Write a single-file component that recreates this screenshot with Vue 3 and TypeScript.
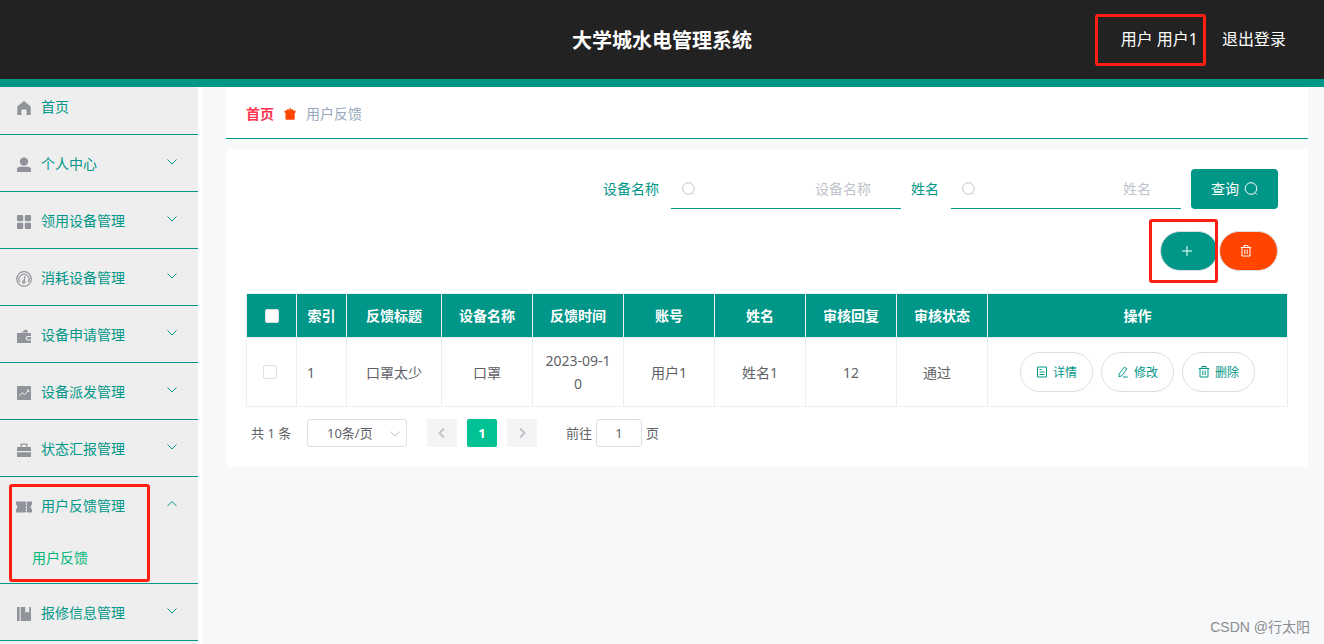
<script setup lang="ts">
import { ref } from 'vue'

interface MenuItem {
  name: string
  icon: string
  children?: string[]
}

interface Row {
  title: string
  device: string
  date: string
  account: string
  person: string
  reply: string
  status: string
}

const menu: MenuItem[] = [
  { name: '个人中心', icon: 'user' },
  { name: '领用设备管理', icon: 'grid' },
  { name: '消耗设备管理', icon: 'gauge' },
  { name: '设备申请管理', icon: 'wallet' },
  { name: '设备派发管理', icon: 'chart' },
  { name: '状态汇报管理', icon: 'case' },
  { name: '用户反馈管理', icon: 'ticket', children: ['用户反馈'] },
  { name: '报修信息管理', icon: 'book' },
]

const columns = ['反馈标题', '设备名称', '反馈时间', '账号', '姓名', '审核回复', '审核状态']

const rows: Row[] = [
  {
    title: '口罩太少',
    device: '口罩',
    date: '2023-09-10',
    account: '用户1',
    person: '姓名1',
    reply: '12',
    status: '通过',
  },
]

const deviceName = ref('')
const personName = ref('')
const pageSize = ref('10')
const jumpPage = ref('1')
</script>

<template>
  <div class="page">
    <header class="header">
      <span></span>
      <h1>大学城水电管理系统</h1>
      <div class="account">
        <span class="user">用户 用户1<i class="mark mark-user"></i></span>
        <a href="#" class="logout">退出登录</a>
      </div>
    </header>

    <div class="body">
      <nav class="sidebar">
        <ul>
          <li class="home">
            <a href="#" class="entry">
              <svg class="icon" viewBox="0 0 16 16">
                <path d="M8 1 1.3 6.4V14.6q0 .4.4.4H5.4V10q0-.5.5-.5h4.2q.5 0 .5.5v5h3.7q.4 0 .4-.4V6.4z" />
              </svg>
              <span>首页</span>
            </a>
          </li>
          <li v-for="item in menu" :key="item.name">
            <button type="button" class="entry" :aria-expanded="!!item.children">
              <svg class="icon" viewBox="0 0 16 16">
                <template v-if="item.icon === 'user'">
                  <circle cx="8" cy="4.6" r="4.2" />
                  <path d="M1 15v-2.4Q1 9.8 3.8 9.8h8.4Q15 9.8 15 12.6V15z" />
                </template>
                <template v-else-if="item.icon === 'grid'">
                  <rect x="1" y="1" width="6.2" height="6.2" rx="1" />
                  <rect x="8.8" y="1" width="6.2" height="6.2" rx="1" />
                  <rect x="1" y="8.8" width="6.2" height="6.2" rx="1" />
                  <rect x="8.8" y="8.8" width="6.2" height="6.2" rx="1" />
                </template>
                <template v-else-if="item.icon === 'gauge'">
                  <g fill="none" stroke="#909399" stroke-width="1.2">
                    <circle cx="8" cy="8" r="7.3" />
                    <path d="M3.9 11.2A5 5 0 1 1 12.1 11.2M9 5 8 10" />
                    <circle cx="7.8" cy="11" r="1.2" />
                  </g>
                </template>
                <template v-else-if="item.icon === 'wallet'">
                  <path d="M5 4.4 9.8 1.5q.5-.2.8.2l1.7 2.7z" />
                  <path fill-rule="evenodd" d="M1 5h13.4q.6 0 .6.6V8h-3.1a2.3 2.3 0 0 0 0 4.6H15v1.8q0 .6-.6.6H1.6q-.6 0-.6-.6z" />
                  <path d="M12.1 9.1H15v2.4h-2.9a1.2 1.2 0 0 1 0-2.4z" />
                </template>
                <template v-else-if="item.icon === 'chart'">
                  <rect x="1" y="1" width="14" height="14" rx="0.6" />
                  <path d="M3.5 10.8 6.2 7.6l2.5 2 3.9-4.3M10.8 5.1h2v2" fill="none" stroke="#eee" />
                </template>
                <template v-else-if="item.icon === 'case'">
                  <path fill-rule="evenodd" d="M4.6 5V2q0-.6.6-.6h5.6q.6 0 .6.6v3H14.4q.6 0 .6.6V9H1V5.6Q1 5 1.6 5zM5.9 5h4.2V2.7H5.9z" />
                  <path d="M1 10.2h14v4.2q0 .6-.6.6H1.6q-.6 0-.6-.6z" />
                </template>
                <template v-else-if="item.icon === 'ticket'">
                  <path d="M0 2.4h9.4l1 1.2 1-1.2H16v3.2q-2.8 2.4 0 4.8v3.2h-4.6l-1-1.2-1 1.2H0v-3.2q2.8-2.4 0-4.8z" />
                  <path d="M10.4 4.3v2M10.4 7.2v2M10.4 10.1v2" stroke="#eee" stroke-width="1.2" />
                </template>
                <template v-else>
                  <path d="M1 1h2.6v14H1zM4.7 1h4.5v6l2-1.6 2 1.6V1h1.3q.5 0 .5.5v13q0 .5-.5.5H4.7z" />
                </template>
              </svg>
              <span>{{ item.name }}</span>
              <svg class="arrow" viewBox="0 0 12 12">
                <path :d="item.children ? 'M1.5 8 6 3.5 10.5 8' : 'M1.5 3.5 6 8l4.5-4.5'" />
              </svg>
            </button>
            <a v-for="child in item.children" :key="child" href="#" class="child">{{ child }}</a>
            <i v-if="item.children" class="mark mark-menu"></i>
          </li>
        </ul>
      </nav>

      <main class="main">
        <div class="crumbs">
          <a href="#">首页</a>
          <svg viewBox="0 0 12 12">
            <path d="M5.4 0h1.4v2L8.6 1l.9 1.6h1.6q.5 0 .5.5v1.7h-.9v6q0 1-1 1H2.5q-1 0-1-1v-6H.6V3.1q0-.5.5-.5h1.6L3.6 1l1.8 1z" />
          </svg>
          <span>用户反馈</span>
        </div>

        <section class="card">
          <form class="search" @submit.prevent>
            <label for="device">设备名称</label>
            <div class="field">
              <svg viewBox="0 0 14 14"><circle cx="7.4" cy="6.5" r="5.8" /><path d="m11.4 10.6 2 2" /></svg>
              <input id="device" v-model="deviceName" type="text" placeholder="设备名称" />
            </div>
            <label for="person">姓名</label>
            <div class="field">
              <svg viewBox="0 0 14 14"><circle cx="7.4" cy="6.5" r="5.8" /><path d="m11.4 10.6 2 2" /></svg>
              <input id="person" v-model="personName" type="text" placeholder="姓名" />
            </div>
            <button type="submit" class="query">
              查询
              <svg viewBox="0 0 14 14"><circle cx="7" cy="6.5" r="5.8" /><path d="m11 10.6 2 2" /></svg>
            </button>
          </form>

          <div class="tools">
            <div class="add-wrap">
              <button type="button" class="pill add" aria-label="新增">
                <svg viewBox="0 0 12 12"><path d="M6 1v10M1 6h10" /></svg>
              </button>
              <i class="mark mark-add"></i>
            </div>
            <button type="button" class="pill remove" aria-label="删除">
              <svg viewBox="0 0 12 12"><path d="M.8 2.5h10.4M4 2.5v-2h4v2M2 2.5v8.5h8v-8.5M4.8 4.5v4.5M7.2 4.5v4.5" /></svg>
            </button>
          </div>

          <table>
            <colgroup>
              <col class="w-check" />
              <col class="w-check" />
              <col class="w-title" />
              <col span="6" />
              <col class="w-action" />
            </colgroup>
            <thead>
              <tr>
                <th><input type="checkbox" aria-label="全选" /></th>
                <th>索引</th>
                <th v-for="c in columns" :key="c">{{ c }}</th>
                <th>操作</th>
              </tr>
            </thead>
            <tbody>
              <tr v-for="(row, i) in rows" :key="i">
                <td class="pick"><input type="checkbox" aria-label="选择" /></td>
                <td class="index">{{ i + 1 }}</td>
                <td>{{ row.title }}</td>
                <td>{{ row.device }}</td>
                <td>{{ row.date }}</td>
                <td>{{ row.account }}</td>
                <td>{{ row.person }}</td>
                <td>{{ row.reply }}</td>
                <td class="status">{{ row.status }}</td>
                <td>
                  <div class="actions">
                    <button type="button">
                      <svg viewBox="0 0 12 12"><path d="M1.5 1h9v10h-9zM3.5 3.5h2M3.5 6h5M3.5 8.5h5" /></svg>详情
                    </button>
                    <button type="button">
                      <svg viewBox="0 0 12 12"><path d="M7.4 1.2 9.8 2.8 4.8 9.8l-2.9.9.4-3zM6 11h4.7" /></svg>修改
                    </button>
                    <button type="button">
                      <svg viewBox="0 0 12 12"><path d="M.8 2.5h10.4M4 2.5v-2h4v2M2 2.5v8.5h8v-8.5M4.8 4.5v4.5M7.2 4.5v4.5" /></svg>删除
                    </button>
                  </div>
                </td>
              </tr>
            </tbody>
          </table>

          <div class="pager">
            <span class="total">共 1 条</span>
            <div class="size">
              <select v-model="pageSize" aria-label="每页条数">
                <option value="10">10条/页</option>
                <option value="20">20条/页</option>
              </select>
              <svg viewBox="0 0 12 12"><path d="M1.5 3.5 6 8l4.5-4.5" /></svg>
            </div>
            <button type="button" disabled aria-label="上一页">
              <svg viewBox="0 0 12 12"><path d="M8 1.5 3.5 6 8 10.5" /></svg>
            </button>
            <button type="button" class="current">1</button>
            <button type="button" disabled aria-label="下一页">
              <svg viewBox="0 0 12 12"><path d="M4 1.5 8.5 6 4 10.5" /></svg>
            </button>
            <label class="jump">前往<input v-model="jumpPage" type="text" />页</label>
          </div>
        </section>
      </main>
    </div>
    <div class="watermark">CSDN @行太阳</div>
  </div>
</template>

<style>
body {
  margin: 0;
}
</style>

<style scoped>
.page,
.page * {
  box-sizing: border-box;
}
.page {
  position: relative;
  display: flex;
  flex-direction: column;
  min-height: 100vh;
  background: #f7f8fa;
  color: #606266;
  font-family: "Noto Sans", "Noto Sans CJK SC", sans-serif;
  font-size: 14px;
  line-height: 20px;
}
button,
input,
select {
  margin: 0;
  padding: 0;
  border: 0;
  font: inherit;
  color: inherit;
  background: none;
}
button {
  cursor: pointer;
}
a {
  color: inherit;
  text-decoration: none;
}
svg {
  flex: none;
}
.mark {
  position: absolute;
  border: 3px solid #ff1e10;
  border-radius: 3px;
  pointer-events: none;
}

.header {
  display: grid;
  grid-template-columns: 1fr auto 1fr;
  align-items: center;
  height: 87px;
  background: #222;
  border-bottom: 8px solid #009688;
  color: #fff;
}
.header h1 {
  margin: 0;
  padding-top: 2px;
  font-size: 20px;
  line-height: 28px;
}
.account {
  display: flex;
  justify-content: flex-end;
  gap: 24px;
  padding: 0 38px 2px 0;
  font-size: 16px;
}
.user {
  position: relative;
}
.mark-user {
  inset: -15px -8px -17px -26px;
}

.body {
  flex: 1;
  display: flex;
}
.sidebar {
  flex: none;
  width: 202px;
  background: #eee;
  border-right: 4px solid #fff;
  color: #009688;
}
.sidebar ul {
  margin: 0;
  padding: 0;
  list-style: none;
}
.sidebar li {
  position: relative;
  border-bottom: 1px solid #009688;
}
.entry {
  display: flex;
  align-items: center;
  gap: 9px;
  width: 100%;
  height: 56px;
  padding: 2px 20px 0 16px;
  text-align: left;
}
.home .entry {
  height: 47px;
  padding: 0 20px 8px 16px;
}
.icon {
  width: 16px;
  height: 16px;
  margin-top: 2px;
  fill: #909399;
}
.arrow {
  width: 12px;
  height: 12px;
  margin: 0 0 4px auto;
  fill: none;
  stroke: #009688;
}
.child {
  display: block;
  padding-left: 32px;
  line-height: 50px;
  color: #00b878;
}
.mark-menu {
  inset: 7px 48px 1px 9px;
}

.main {
  flex: 1;
  min-width: 0;
  padding: 0 16px 0 24px;
}
.crumbs {
  display: flex;
  align-items: center;
  height: 52px;
  padding: 2px 20px 0;
  gap: 10px;
  background: #fff;
  border-bottom: 1px solid #009688;
  color: #97a8be;
}
.crumbs a {
  color: #fc3450;
  font-weight: bold;
}
.crumbs svg {
  width: 12px;
  height: 12px;
  fill: #ff4500;
}
.card {
  margin-top: 10px;
  padding: 20px;
  background: #fff;
}

.search {
  display: flex;
  align-items: center;
  justify-content: flex-end;
  gap: 10px;
  padding-right: 10px;
  color: #009688;
}
.search svg {
  width: 14px;
  height: 14px;
  fill: none;
  stroke: currentColor;
}
.search label {
  padding-right: 2px;
}
.field {
  display: flex;
  align-items: center;
  width: 230px;
  height: 40px;
  padding: 0 30px 0 10px;
  border-bottom: 1px solid #009688;
  color: #c0c4cc;
}
.field input {
  flex: 1;
  min-width: 0;
  height: 38px;
  outline: none;
  text-align: right;
  color: #606266;
}
.field input::placeholder {
  color: #c0c4cc;
  opacity: 1;
}
.query {
  display: flex;
  align-items: center;
  gap: 5px;
  height: 40px;
  padding: 0 20px;
  border-radius: 4px;
  background: #009688;
  color: #fff;
}

.tools {
  display: flex;
  justify-content: flex-end;
  gap: 1px;
  padding: 22px 10px;
}
.add-wrap {
  position: relative;
}
.pill {
  display: flex;
  align-items: center;
  width: 59px;
  height: 40px;
  padding-left: 20px;
  border: 1px solid #dcdfe6;
  border-radius: 20px;
}
.pill svg {
  width: 12px;
  height: 12px;
  fill: none;
  stroke: #fff;
}
.add {
  width: 58px;
  background: #009688;
}
.remove {
  background: #ff4500;
}
.mark-add {
  inset: -12px 0 -12px -11px;
}

table {
  width: 100%;
  table-layout: fixed;
  border-collapse: separate;
  border-spacing: 0;
  border: 1px solid #ebeef5;
  border-width: 1px 0 0 1px;
}
.w-check {
  width: 50px;
}
.w-title {
  width: 95px;
}
.w-action {
  width: 300px;
}
th,
td {
  padding: 0 10px;
  border: 1px solid #ebeef5;
  border-width: 0 1px 1px 0;
  text-align: center;
  line-height: 23px;
  word-break: break-all;
}
th {
  height: 44px;
  padding: 0 4px;
  background: #009688;
  color: #fff;
}
td {
  height: 69px;
}
input[type="checkbox"] {
  display: block;
  width: 14px;
  height: 14px;
  margin: 0 auto;
  appearance: none;
  border: 1px solid #dcdfe6;
  border-radius: 2px;
  background: #fff;
}
.pick {
  padding: 0 12px 0 8px;
}
.index {
  text-align: left;
}
.status {
  padding-right: 20px;
}
.actions {
  display: flex;
  justify-content: center;
  gap: 8px;
}
.actions button {
  display: flex;
  align-items: center;
  gap: 5px;
  height: 40px;
  padding: 0 15px;
  border: 1px solid #dcdfe6;
  border-radius: 20px;
  color: #009688;
  font-size: 12px;
}
.actions svg {
  width: 12px;
  height: 12px;
  fill: none;
  stroke: currentColor;
}

.pager {
  display: flex;
  align-items: center;
  gap: 10px;
  padding: 12px 5px 0;
  font-size: 13px;
}
.pager svg {
  width: 12px;
  height: 12px;
  fill: none;
  stroke: #c0c4cc;
}
.total {
  width: 46px;
  white-space: nowrap;
}
.size {
  position: relative;
  width: 100px;
  height: 28px;
  margin-right: 10px;
}
.size select {
  width: 100%;
  height: 28px;
  padding: 0 34px 0 19px;
  appearance: none;
  border: 1px solid #dcdfe6;
  border-radius: 3px;
}
.size svg {
  position: absolute;
  right: 6px;
  top: 9px;
  pointer-events: none;
}
.pager button {
  display: flex;
  align-items: center;
  justify-content: center;
  width: 30px;
  height: 28px;
  border-radius: 2px;
  background: #f4f4f5;
}
.pager button svg {
  stroke-width: 2;
}
.pager .current {
  background: #00c292;
  color: #fff;
  font-weight: bold;
}
.jump {
  display: flex;
  align-items: center;
  gap: 4px;
  margin-left: 19px;
}
.jump input {
  width: 46px;
  height: 28px;
  border: 1px solid #dcdfe6;
  border-radius: 3px;
  text-align: center;
}
.watermark {
  position: absolute;
  right: 14px;
  bottom: 7px;
  color: #8c8d90;
  font-family: "Liberation Sans", "Noto Sans CJK SC", sans-serif;
}
</style>
